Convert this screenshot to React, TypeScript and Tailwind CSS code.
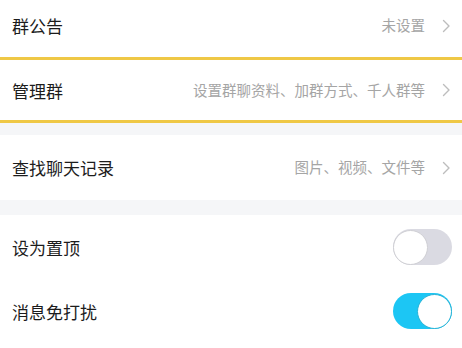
import React from "react";

const font = { fontFamily: '"Noto Sans CJK SC", "Noto Sans", sans-serif' };

function Chevron() {
  return (
    <svg width="9" height="14" viewBox="0 0 9 14" className="ml-[17px] shrink-0">
      <path d="M1.5 1.5 L7 7 L1.5 12.5" fill="none" stroke="#bdbdbd" strokeWidth="1.4" strokeLinecap="round" strokeLinejoin="round" />
    </svg>
  );
}

function Row({ title, sub, className }: { title: string; sub: string; className: string }) {
  return (
    <div className={`flex items-center justify-between bg-white pl-[12px] pr-[11px] ${className}`}>
      <span className="text-[17px] text-[#1c1c1c] leading-none">{title}</span>
      <div className="flex items-center">
        <span className="text-[14.5px] text-[#a5a5a5] leading-none">{sub}</span>
        <Chevron />
      </div>
    </div>
  );
}

function Toggle({ on }: { on: boolean }) {
  return (
    <div
      className={`flex h-[36px] w-[59px] items-center rounded-full ${
        on ? "justify-end bg-[#1cc6f4]" : "justify-start bg-[#dadae2]"
      }`}
    >
      <div
        className={`h-[35px] w-[35px] rounded-full bg-white border ${
          on ? "border-[#27b3d6]" : "border-[#cfcfd4]"
        }`}
      />
    </div>
  );
}

function ToggleRow({ title, on, className }: { title: string; on: boolean; className: string }) {
  return (
    <div className={`flex items-center justify-between bg-white pl-[12px] pr-[10px] ${className}`}>
      <span className="text-[17px] text-[#1c1c1c] leading-none">{title}</span>
      <Toggle on={on} />
    </div>
  );
}

export default function App() {
  return (
    <div className="h-[348px] w-[462px] overflow-hidden bg-[#f5f6f8]" style={font}>
      <Row title="群公告" sub="未设置" className="h-[57px] pb-[6px]" />
      <div className="h-[3px] bg-[#efc846]" />
      <Row title="管理群" sub="设置群聊资料、加群方式、千人群等" className="h-[60px]" />
      <div className="h-[3px] bg-[#efc846]" />
      <div className="h-[12px]" />
      <Row title="查找聊天记录" sub="图片、视频、文件等" className="h-[65px]" />
      <div className="h-[15px]" />
      <ToggleRow title="设为置顶" on={false} className="h-[64px]" />
      <ToggleRow title="消息免打扰" on={true} className="h-[69px] pb-[5px]" />
    </div>
  );
}
